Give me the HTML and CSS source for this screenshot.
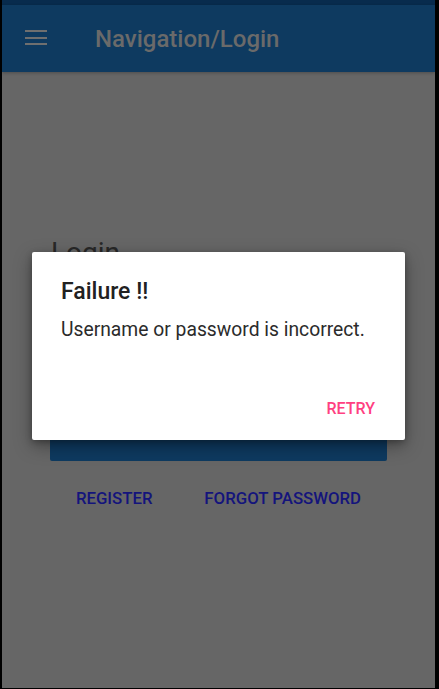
FILE: index.html
```html
<!DOCTYPE html>
<html lang="en">
<head>
<meta charset="utf-8">
<title>Navigation/Login</title>
<link rel="stylesheet" href="styles.css">
</head>
<body>
<div class="screen">
  <div class="status-bar"></div>
  <header class="app-bar">
    <svg class="menu-icon" width="22" height="15" viewBox="0 0 22 15" aria-hidden="true">
      <rect x="0" y="0" width="22" height="2" fill="#6f6f6f"/>
      <rect x="0" y="7" width="22" height="2" fill="#6f6f6f"/>
      <rect x="0" y="13" width="22" height="2" fill="#6f6f6f"/>
    </svg>
    <h1 class="app-title">Navigation/Login</h1>
  </header>
  <main class="content">
    <h2 class="login-heading">Login</h2>
    <div class="field"></div>
    <div class="field"></div>
    <div class="login-button" aria-label="Login"></div>
    <div class="links">
      <span class="link">REGISTER</span>
      <span class="link">FORGOT PASSWORD</span>
    </div>
  </main>
  <div class="dialog" role="alertdialog">
    <div class="dialog-title">Failure !!</div>
    <div class="dialog-body">Username or password is incorrect.</div>
    <div class="dialog-actions"><span class="dialog-action">RETRY</span></div>
  </div>
</div>
</body>
</html>
```

FILE: styles.css
```css
html, body {
  margin: 0;
  padding: 0;
  background: #000;
}

body {
  font-family: Roboto, "Noto Sans", "Liberation Sans", sans-serif;
}

.screen {
  position: relative;
  margin: 0 4px 1px 2px;
  height: 688px;
  display: flex;
  flex-direction: column;
  background: #666666;
  overflow: hidden;
}

.status-bar {
  height: 5px;
  background: #082b4d;
  flex: none;
}

.app-bar {
  height: 67px;
  flex: none;
  background: #0e3a60;
  display: flex;
  align-items: center;
  box-shadow: 0 1px 3px rgba(0, 0, 0, 0.25);
  position: relative;
  z-index: 1;
}

.menu-icon {
  margin-left: 23px;
  margin-top: -3px;
  flex: none;
}

.app-title {
  margin: 0 0 0 48px;
  font-size: 24px;
  font-weight: 500;
  color: #6a6a6a;
  line-height: 28px;
}

.content {
  flex: 1;
  display: flex;
  flex-direction: column;
  padding: 0 48px;
}

.login-heading {
  margin: 165px 0 0 1px;
  font-size: 28px;
  font-weight: 400;
  line-height: 32px;
  color: #282828;
}

.field {
  height: 48px;
  margin-top: 16px;
  border-bottom: 1px solid #555;
  box-sizing: border-box;
}

.login-button {
  margin-top: 16px;
  height: 48px;
  background: #0e3a60;
  border-radius: 2px;
}

.links {
  margin-top: 27px;
  display: flex;
  justify-content: space-around;
}

.link {
  font-size: 16.8px;
  font-weight: 500;
  line-height: 20px;
  color: #14147c;
}

.dialog {
  position: absolute;
  top: 252px;
  left: 30px;
  right: 30px;
  height: 188px;
  background: #fff;
  border-radius: 2px;
  box-shadow: 0 6px 18px rgba(0, 0, 0, 0.35), 0 2px 6px rgba(0, 0, 0, 0.25);
  display: flex;
  flex-direction: column;
  box-sizing: border-box;
  padding: 26px 30px 21px 29px;
}

.dialog-title {
  font-size: 23px;
  font-weight: 500;
  line-height: 28px;
  color: #212121;
}

.dialog-body {
  margin-top: 12px;
  font-size: 19.3px;
  line-height: 24px;
  color: #2b2b2b;
  flex: 1;
}

.dialog-actions {
  display: flex;
  justify-content: flex-end;
}

.dialog-action {
  font-size: 16px;
  font-weight: 500;
  line-height: 20px;
  color: #ff4081;
}
```
